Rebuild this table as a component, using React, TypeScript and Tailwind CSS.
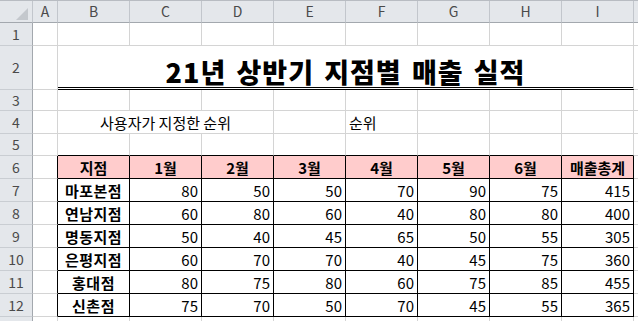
import React from 'react';

const COLS = ['B', 'C', 'D', 'E', 'F', 'G', 'H', 'I'];

const DATA: [string, number[]][] = [
  ['마포본점', [80, 50, 50, 70, 90, 75, 415]],
  ['연남지점', [60, 80, 60, 40, 80, 80, 400]],
  ['명동지점', [50, 40, 45, 65, 50, 55, 305]],
  ['은평지점', [60, 70, 70, 40, 45, 75, 360]],
  ['홍대점', [80, 75, 80, 60, 75, 85, 455]],
  ['신촌점', [75, 70, 50, 70, 45, 55, 365]],
];

const HEADERS = ['지점', '1월', '2월', '3월', '4월', '5월', '6월', '매출총계'];

function RowHead({ n }: { n: string }) {
  return (
    <div className="w-[33px] shrink-0 bg-[#e4e7eb] border-r border-b border-r-[#a3a8ae] border-b-[#c9cdd2] flex items-center justify-center text-[14px] text-[#4a4a4a]">
      {n}
    </div>
  );
}

function Row({
  n,
  h,
  aBlack,
  children,
}: {
  n: string;
  h: string;
  aBlack?: boolean;
  children?: React.ReactNode;
}) {
  return (
    <div className={`flex ${h}`}>
      <RowHead n={n} />
      <div
        className={
          aBlack
            ? 'w-[25px] shrink-0 border-b border-b-[#d4d4d4] border-r border-r-black'
            : 'w-[25px] shrink-0 border-b border-r border-[#d4d4d4]'
        }
      />
      {children}
      <div className="flex-1 border-b border-[#d4d4d4]" />
    </div>
  );
}

function Empty({ bottomBlack }: { bottomBlack?: boolean }) {
  return (
    <div
      className={
        bottomBlack
          ? 'w-[72px] shrink-0 border-r border-r-[#d4d4d4] border-b border-b-black'
          : 'w-[72px] shrink-0 border-r border-b border-[#d4d4d4]'
      }
    />
  );
}

export default function App() {
  return (
    <div className="w-[638px] h-[321px] overflow-hidden bg-white font-['Noto_Sans_CJK_KR',sans-serif] text-black">
      {/* column header */}
      <div className="flex h-[23px] bg-[#e4e7eb] border-t border-t-[#b8bcc2]">
        <div className="w-[33px] shrink-0 border-r border-b border-r-[#c2c6cc] border-b-[#a3a8ae] relative">
          <svg className="absolute left-0 top-0" width="33" height="22" viewBox="0 0 33 22">
            <polygon points="28,7 28,19 16,19" fill="#c4c8cd" />
          </svg>
        </div>
        <div className="w-[25px] shrink-0 border-r border-b border-r-[#c2c6cc] border-b-[#a3a8ae] flex items-center justify-center text-[14px] text-[#4a4a4a]">
          A
        </div>
        {COLS.map((c) => (
          <div
            key={c}
            className="w-[72px] shrink-0 border-r border-b border-r-[#c2c6cc] border-b-[#a3a8ae] flex items-center justify-center text-[14px] text-[#4a4a4a]"
          >
            {c}
          </div>
        ))}
        <div className="flex-1 border-b border-b-[#a3a8ae]" />
      </div>

      {/* row 1 */}
      <Row n="1" h="h-[23px]">
        {COLS.map((c) => (
          <Empty key={c} />
        ))}
      </Row>

      {/* row 2 title */}
      <Row n="2" h="h-[44px]">
        <div className="w-[576px] shrink-0 border-r border-r-[#d4d4d4] border-b-[3px] border-double border-b-black flex items-end justify-center pb-[2px]">
          <span className="text-[27px] font-extrabold leading-none tracking-[1px] [word-spacing:3px]">
            21년 상반기 지점별 매출 실적
          </span>
        </div>
      </Row>

      {/* row 3 */}
      <Row n="3" h="h-[21px]">
        {COLS.map((c) => (
          <Empty key={c} />
        ))}
      </Row>

      {/* row 4 */}
      <Row n="4" h="h-[23px]">
        <div className="w-[216px] shrink-0 border-r border-b border-[#d4d4d4] flex items-center justify-center text-[15px] leading-none">
          사용자가 지정한 순위
        </div>
        <Empty />
        <div className="w-[72px] shrink-0 border-r border-b border-[#d4d4d4] flex items-center pl-[3px] text-[15px] leading-none">
          순위
        </div>
        <Empty />
        <Empty />
        <Empty />
      </Row>

      {/* row 5 */}
      <Row n="5" h="h-[22px]">
        {COLS.map((c) => (
          <Empty key={c} bottomBlack />
        ))}
      </Row>

      {/* row 6 header */}
      <Row n="6" h="h-[23px]" aBlack>
        {HEADERS.map((t) => (
          <div
            key={t}
            className="w-[72px] shrink-0 bg-[#ffcccc] border-r border-b border-black flex items-center justify-center text-[15px] font-bold leading-none"
          >
            {t}
          </div>
        ))}
      </Row>

      {DATA.map(([name, vals], i) => (
        <Row key={name} n={String(7 + i)} h="h-[23px]" aBlack>
          <div className="w-[72px] shrink-0 border-r border-b border-black flex items-center justify-center text-[15px] font-bold leading-none tracking-[0.5px]">
            {name}
          </div>
          {vals.map((v, j) => (
            <div
              key={j}
              className="w-[72px] shrink-0 border-r border-b border-black flex items-center justify-end pr-[3px] text-[15px] leading-none"
            >
              {v}
            </div>
          ))}
        </Row>
      ))}

      {/* row 13 (mostly cut off) */}
      <Row n="" h="h-[23px]">
        {COLS.map((c) => (
          <Empty key={c} />
        ))}
      </Row>
    </div>
  );
}
